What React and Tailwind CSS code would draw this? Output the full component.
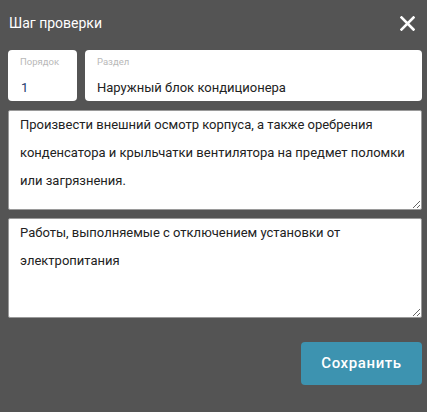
export default function App() {
  return (
    <div className="w-[427px] h-[412px] bg-[#545454] pl-2 pr-[5px] font-['Roboto',sans-serif] overflow-hidden">
      <div className="flex items-center justify-between h-[46px] pl-px">
        <h1 className="text-white text-[14px] leading-none">Шаг проверки</h1>
        <button className="text-white mr-[7px] mt-[1px]">
          <svg width="15" height="15" viewBox="0 0 15 15" fill="none" stroke="currentColor" strokeWidth="2.6" strokeLinecap="square">
            <path d="M1.5 1.5 L13.5 13.5 M13.5 1.5 L1.5 13.5" />
          </svg>
        </button>
      </div>

      <div className="flex gap-2 mt-1">
        <div className="w-[69px] h-[51px] bg-white rounded-[4px] pl-3 pt-[6px]">
          <div className="text-[9.5px] text-[#b8b8b8] leading-[12px]">Порядок</div>
          <div className="text-[13px] text-[#1e3a6e] mt-[12px] leading-4 pl-[1px]">1</div>
        </div>
        <div className="flex-1 h-[51px] bg-white rounded-[4px] pl-3 pt-[6px]">
          <div className="text-[9.5px] text-[#b8b8b8] leading-[12px]">Раздел</div>
          <div className="text-[13px] text-[#222] mt-[12px] leading-4">Наружный блок кондиционера</div>
        </div>
      </div>

      <textarea
        className="block w-full h-[100px] mt-[9px] bg-white border border-[#9a9a9a] rounded-[2px] px-[11px] pt-0 text-[13px] leading-[28px] text-[#222] outline-none"
        defaultValue="Произвести внешний осмотр корпуса, а также оребрения конденсатора и крыльчатки вентилятора на предмет поломки или загрязнения."
      />

      <textarea
        className="block w-full h-[100px] mt-[8px] bg-white border border-[#9a9a9a] rounded-[2px] px-[11px] pt-0 text-[13px] leading-[28px] text-[#222] outline-none"
        defaultValue="Работы, выполняемые с отключением установки от электропитания"
      />

      <div className="flex justify-end mt-[24px]">
        <button className="w-[121px] h-[43px] bg-[#3d93b0] rounded-[4px] text-white text-[15px] font-medium tracking-[0.04em]">
          Сохранить
        </button>
      </div>
    </div>
  );
}
